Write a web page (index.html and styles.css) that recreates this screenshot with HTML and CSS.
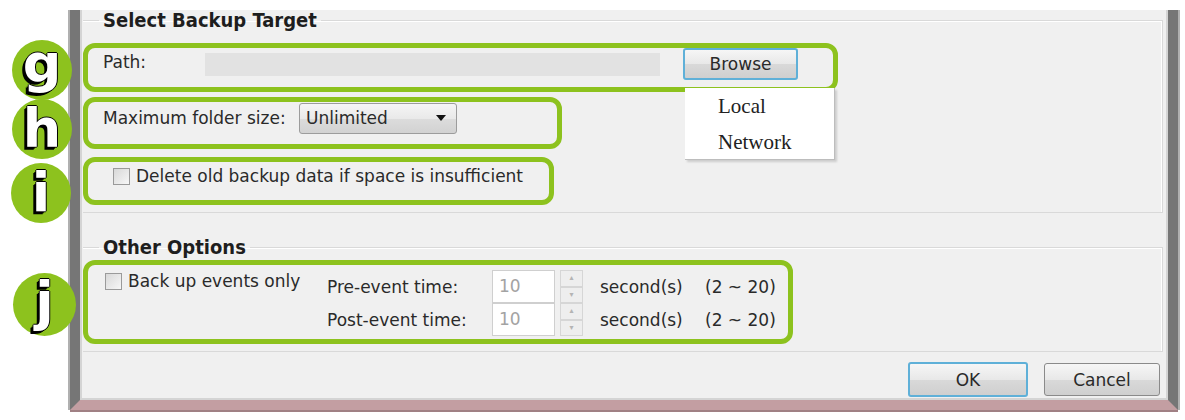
FILE: index.html
```html
<!DOCTYPE html>
<html lang="en">
<head>
    <meta charset="UTF-8">
    <title>Backup Settings</title>
    <link rel="stylesheet" href="styles.css">
</head>
<body>
    <div class="stage">
        <div class="window">
            <fieldset class="group group-target">
                <legend>Select Backup Target</legend>

                <div class="mark mark-path">
                    <span class="label label-path">Path:</span>
                    <div class="path-field"></div>
                    <button class="btn btn-browse">Browse</button>
                </div>

                <div class="mark mark-size">
                    <span class="label label-size">Maximum folder size:</span>
                    <div class="select">
                        <span>Unlimited</span>
                        <span class="caret"></span>
                    </div>
                </div>

                <div class="mark mark-delete">
                    <label class="check"><span class="box"></span>Delete old backup data if space is insufficient</label>
                </div>
            </fieldset>

            <fieldset class="group group-other">
                <legend>Other Options</legend>

                <div class="mark mark-events">
                    <div class="events">
                        <label class="check check-events"><span class="box"></span>Back up events only</label>
                        <span class="label">Pre-event time:</span>
                        <div class="num">10</div>
                        <div class="spin"><span>&#9652;</span><span>&#9662;</span></div>
                        <span class="label">second(s)</span>
                        <span class="label">(2 ~ 20)</span>

                        <span class="label label-post">Post-event time:</span>
                        <div class="num">10</div>
                        <div class="spin"><span>&#9652;</span><span>&#9662;</span></div>
                        <span class="label">second(s)</span>
                        <span class="label">(2 ~ 20)</span>
                    </div>
                </div>
            </fieldset>

            <div class="actions">
                <button class="btn btn-ok">OK</button>
                <button class="btn btn-cancel">Cancel</button>
            </div>

            <!-- popup opened from the Browse button -->
            <ul class="menu">
                <li>Local</li>
                <li>Network</li>
            </ul>
        </div>

        <div class="badge badge-g">g</div>
        <div class="badge badge-h">h</div>
        <div class="badge badge-i">i</div>
        <div class="badge badge-j">j</div>
    </div>
</body>
</html>
```

FILE: styles.css
```css
/* Backup settings dialog with callout marks */
body {
    margin: 0;
    background: #fff;
    font-family: "DejaVu Sans", Arial, sans-serif;
    font-size: 17px;
    color: #2a2a2a;
}
.stage {
    position: relative;
    width: 1185px;
    height: 420px;
    padding-top: 10px;
    box-sizing: border-box;
}

/* window frame */
.window {
    position: relative;
    box-sizing: border-box;
    margin-left: 70px;
    width: 1108px;
    height: 400px;
    background: #f0f0f0;
    border-left: 10px solid #767676;
    border-right: 10px solid #767676;
    border-bottom: 10px solid #c39ea2;
    box-shadow: inset 2px 0 0 #d4d4d4, inset -2px 0 0 #d4d4d4, inset 0 -2px 0 #d4d4d4, -2px 0 0 #b0b0b0, 2px 0 0 #b0b0b0, 0 2px 0 #a08084;
}

/* group boxes */
.group {
    margin: 0 5px 0 3px;
    padding: 13px 0 7px;
    border: 1px solid #d9d9d9;
    border-left: none;
    min-width: 0;
    box-shadow: inset 0 1px 0 #fff, -1px 0 0 #fff inset;
}
.group legend {
    margin-left: 16px;
    padding: 0 4px;
    font-family: "DejaVu Sans Condensed", "DejaVu Sans", sans-serif;
    font-weight: bold;
    font-size: 20px;
    line-height: 20px;
    color: #1e1e1e;
}
.group-other {
    margin-top: 24px;
    padding-top: 3px;
}

/* green callout outlines */
.mark {
    box-sizing: border-box;
    display: flex;
    border: 5px solid #8dc21e;
    border-radius: 12px;
}
.mark-path {
    width: 755px;
    height: 49px;
    padding-left: 15px;
    align-items: flex-start;
}
.mark-size {
    width: 479px;
    height: 52px;
    margin-top: 5px;
    padding: 0 0 10px 15px;
    align-items: center;
}
.mark-delete {
    width: 471px;
    height: 48px;
    margin-top: 8px;
    padding: 0 0 10px 25px;
    align-items: center;
}
.mark-events {
    width: 710px;
    height: 84px;
    padding: 5px 0 0 17px;
}

.label {
    line-height: 20px;
    white-space: nowrap;
}
.label-path {
    width: 102px;
    margin-top: 4px;
}
.label-size {
    width: 196px;
}

.path-field {
    width: 455px;
    height: 23px;
    margin-top: 5px;
    background: #e2e2e2;
}

/* buttons */
.btn {
    box-sizing: border-box;
    font-family: "DejaVu Sans", Arial, sans-serif;
    font-size: 17px;
    color: #2a2a2a;
    border: 1px solid #8a8a8a;
    border-radius: 3px;
    background: linear-gradient(#f6f6f6, #e8e8e8 50%, #d9d9d9 51%, #cfcfcf);
    padding: 0;
}
.btn-browse {
    width: 115px;
    height: 32px;
    margin-left: 23px;
    border: 2px solid #5fb0d8;
}
.btn-ok {
    width: 120px;
    height: 35px;
    border: 2px solid #5fb0d8;
}
.btn-cancel {
    width: 116px;
    height: 33px;
    margin-top: 1px;
}

/* drop-down */
.select {
    box-sizing: border-box;
    display: flex;
    align-items: center;
    justify-content: space-between;
    width: 158px;
    height: 31px;
    padding: 0 10px 0 6px;
    border: 1px solid #9c9c9c;
    border-radius: 3px;
    background: linear-gradient(#f5f5f5, #e9e9e9 50%, #dcdcdc 51%, #d2d2d2);
}
.caret {
    width: 0;
    height: 0;
    border-left: 5px solid transparent;
    border-right: 5px solid transparent;
    border-top: 6px solid #111;
}

/* checkboxes */
.check {
    display: flex;
    align-items: center;
    line-height: 20px;
    white-space: nowrap;
}
.box {
    box-sizing: border-box;
    width: 17px;
    height: 17px;
    margin-right: 6px;
    border: 1px solid #9a9a9a;
    background: linear-gradient(135deg, #d8d8d8, #f7f7f7);
}
.check-events {
    align-self: start;
    margin-top: 1px;
}

/* event time grid */
.events {
    display: grid;
    grid-template-columns: 222px 165px 68px 40px 105px auto;
    grid-template-rows: 33px 33px;
    align-items: center;
}
.label-post {
    grid-column: 2;
}
.num {
    box-sizing: border-box;
    width: 63px;
    height: 33px;
    padding-left: 6px;
    line-height: 31px;
    color: #a3a3a3;
    background: #fff;
    border: 1px solid #cfcfcf;
}
.spin {
    display: flex;
    flex-direction: column;
    width: 23px;
    height: 33px;
}
.spin span {
    flex: 1;
    box-sizing: border-box;
    border: 1px solid #d6d6d6;
    background: #eeeeee;
    color: #b4b4b4;
    font-size: 8px;
    line-height: 14px;
    text-align: center;
}

.actions {
    display: flex;
    justify-content: flex-end;
    gap: 16px;
    margin-top: 10px;
    padding-right: 8px;
}

/* popup menu */
.menu {
    position: absolute;
    left: 605px;
    top: 78px;
    box-sizing: border-box;
    width: 150px;
    height: 72px;
    margin: 0;
    padding: 0 0 0 33px;
    list-style: none;
    background: #fff;
    border-right: 1px solid #bdbdbd;
    border-bottom: 1px solid #bdbdbd;
    box-shadow: 2px 2px 2px rgba(0, 0, 0, 0.15);
    font-family: "Liberation Serif", "DejaVu Serif", serif;
    font-size: 21px;
    line-height: 36px;
    color: #222;
}

/* lettered callouts */
.badge {
    position: absolute;
    box-sizing: border-box;
    display: flex;
    align-items: center;
    justify-content: center;
    width: 60px;
    height: 60px;
    border-radius: 50%;
    background: #8dc21e;
    font-family: "DejaVu Sans", sans-serif;
    font-weight: bold;
    font-size: 54px;
    line-height: 1;
    color: #fff;
    text-shadow: -1px 0 #000, 0 -1px #000, 1px 0 #000, 0 1px #000, -2px 2px 0 #000, -3px 3px 0 #000;
}
.badge-g { left: 12px; top: 40px; padding-bottom: 12px; }
.badge-h { left: 12px; top: 99px; }
.badge-i { left: 11px; top: 163px; }
.badge-j { left: 13px; top: 273px; width: 63px; height: 63px; padding-bottom: 6px; }
```
